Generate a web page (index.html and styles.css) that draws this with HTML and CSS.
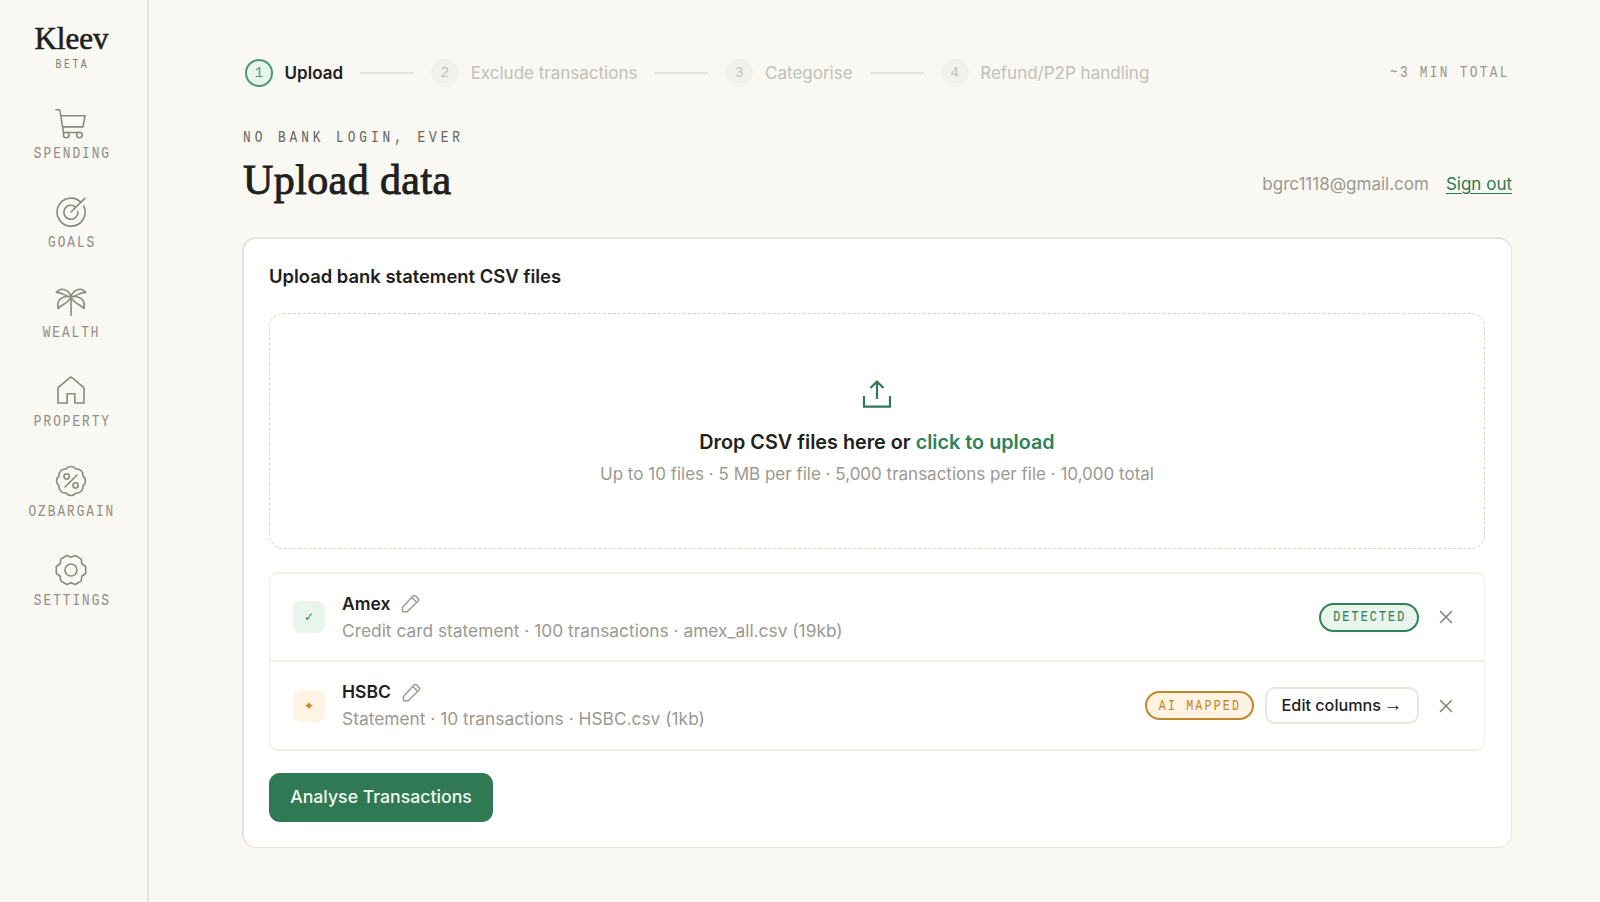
FILE: index.html
```html
<!DOCTYPE html>
<html lang="en">
<head>
  <meta charset="UTF-8" />
  <meta name="viewport" content="width=device-width, initial-scale=1.0"/>
  <title>Kleev - Upload data</title>
  <link rel="stylesheet" href="styles.css">
</head>
<body>
  <aside class="sidebar">
    <div class="logo">Kleev</div>
    <div class="beta mono">BETA</div>

    <nav class="nav">
      <a class="nav-item">
        <svg class="nav-icon" viewBox="0 0 32 32"><path d="M1 2.7h2.6q1.3 0 1.5 1.3L8.6 26.5M6.2 8.8H30l-2 11.1H7.7M12 25.5h12"/><circle cx="11.2" cy="28" r="2.8"/><circle cx="24.4" cy="28" r="2.8"/></svg>
        <span class="mono">SPENDING</span>
      </a>
      <a class="nav-item">
        <svg class="nav-icon" viewBox="0 0 32 32"><path d="M16 16 29.8 2.4M25.5 5.8A14 14 0 1 0 28.8 10.3M20.8 11.2A7 7 0 1 0 22.9 15.5"/></svg>
        <span class="mono">GOALS</span>
      </a>
      <a class="nav-item">
        <svg class="nav-icon" viewBox="0 0 32 32"><path d="M16 11v18.5M16 11C14.5 3.5 5.5 .5 1.3 6.4 7 6.2 10 10 16 11ZM16 11C17.500 3.500 26.500 .5 30.700 6.400 25 6.200 22 10 16 11ZM16 11C9 9 1 13 3 22.500 6 18.500 13 18 16 11ZM16 11C23 9 31 13 29 22.500 26 18.500 19 18 16 11Z"/></svg>
        <span class="mono">WEALTH</span>
      </a>
      <a class="nav-item">
        <svg class="nav-icon" viewBox="0 0 32 32"><path d="M3 28V13.500Q3 12.700 3.600 12.100L15 2.600Q16 1.700 17 2.600L28.400 12.100Q29 12.700 29 13.500V28H19.800V18.800H12.200V28Z"/></svg>
        <span class="mono">PROPERTY</span>
      </a>
      <a class="nav-item">
        <svg class="nav-icon" viewBox="0 0 32 32"><path d="M28 11A6.300 6.300 0 0 1 28 21A6.300 6.300 0 0 1 21 28A6.300 6.300 0 0 1 11 28A6.300 6.300 0 0 1 4 21A6.300 6.300 0 0 1 4 11A6.300 6.300 0 0 1 11 4A6.300 6.300 0 0 1 21 4A6.300 6.300 0 0 1 28 11ZM10 22 22 10"/><circle cx="11.6" cy="11.4" r="2.6"/><circle cx="20.6" cy="20.4" r="2.6"/></svg>
        <span class="mono">OZBARGAIN</span>
      </a>
      <a class="nav-item">
        <svg class="nav-icon" viewBox="0 0 32 32"><path d="M30.7 12.500V19.500L26.800 22.250L26.300 26.900L20.200 30.500L16 28.700L11.800 30.500L5.700 26.900L5.200 22.250L1.300 19.500V12.500L5.200 9.750L5.700 5.100L11.800 1.500L16 3.300L20.200 1.500L26.300 5.100L26.800 9.750Z"/><circle cx="16" cy="16" r="6"/></svg>
        <span class="mono">SETTINGS</span>
      </a>
    </nav>
  </aside>

  <main class="main">
    <div class="steps">
      <div class="step active"><span class="num">1</span>Upload</div>
      <div class="line"></div>
      <div class="step"><span class="num">2</span>Exclude transactions</div>
      <div class="line"></div>
      <div class="step"><span class="num">3</span>Categorise</div>
      <div class="line"></div>
      <div class="step"><span class="num">4</span>Refund/P2P handling</div>
      <div class="total mono">~3 MIN TOTAL</div>
    </div>

    <header class="header">
      <div>
        <div class="eyebrow mono">NO BANK LOGIN, EVER</div>
        <h1>Upload data</h1>
      </div>
      <div class="account">
        <span>bgrc1118@gmail.com</span>
        <a class="sign-out" href="#">Sign out</a>
      </div>
    </header>

    <section class="card">
      <h2>Upload bank statement CSV files</h2>

      <div class="dropzone">
        <svg class="upload-icon" viewBox="0 0 30 30"><path d="M2 17v10.700h26V17M15 20V2.500M8.500 9 15 2.500 21.500 9"/></svg>
        <div class="drop-title">Drop CSV files here or <span>click to upload</span></div>
        <div class="drop-hint">Up to 10 files · 5 MB per file · 5,000 transactions per file · 10,000 total</div>
      </div>

      <div class="files">
        <div class="file">
          <div class="status green">✓</div>
          <div class="info">
            <div class="name">Amex
              <svg class="pencil" viewBox="0 0 20 20"><path d="M1.500 14.200 12.600 2.200Q14 .8 15.500 2.200L18 4.700Q19.200 6 18 7.400L6.500 18.700H2.700Q1.500 18.700 1.500 17.500ZM11.300 3.800 16.300 8.800"/></svg>
            </div>
            <div class="meta">Credit card statement · 100 transactions · amex_all.csv (19kb)</div>
          </div>
          <div class="badge detected green"><span class="mono">DETECTED</span></div>
          <button class="remove"><svg viewBox="0 0 14 14"><path d="M1.500 1.500l11 11M12.500 1.500l-11 11"/></svg></button>
        </div>
        <div class="file">
          <div class="status amber">✦</div>
          <div class="info">
            <div class="name">HSBC
              <svg class="pencil" viewBox="0 0 20 20"><path d="M1.500 14.200 12.600 2.200Q14 .8 15.500 2.200L18 4.700Q19.200 6 18 7.400L6.500 18.700H2.700Q1.500 18.700 1.500 17.500ZM11.300 3.800 16.300 8.800"/></svg>
            </div>
            <div class="meta">Statement · 10 transactions · HSBC.csv (1kb)</div>
          </div>
          <div class="badge mapped amber"><span class="mono">AI MAPPED</span></div>
          <button class="edit">Edit columns <span class="arrow">→</span></button>
          <button class="remove"><svg viewBox="0 0 14 14"><path d="M1.500 1.500l11 11M12.500 1.500l-11 11"/></svg></button>
        </div>
      </div>

      <button class="analyse">Analyse Transactions</button>
    </section>
  </main>
</body>
</html>
```
FILE: styles.css
```css
* {
  box-sizing: border-box;
}

body {
  margin: 0;
  height: 902px;
  display: flex;
  overflow: hidden;
  background: #f9f8f3;
  color: #1e211d;
  font-family: Inter, sans-serif;
  font-size: 17px;
}

svg {
  display: block;
  fill: none;
  stroke: currentColor;
  stroke-width: 1.6;
  stroke-linecap: round;
  stroke-linejoin: round;
}

button {
  font-family: inherit;
  padding: 0;
  cursor: pointer;
}

/* tall, condensed mono labels */
.mono {
  font-family: "Liberation Mono", monospace;
  font-size: 17px;
  line-height: 20px;
  white-space: nowrap;
  transform: scaleX(0.75);
  -webkit-text-stroke: 0.1px;
}

/* sidebar */
.sidebar {
  width: 149px;
  flex-shrink: 0;
  padding: 21px 4px 0 0;
  border-right: 2px solid #e5e4da;
  display: flex;
  flex-direction: column;
  align-items: center;
}

.logo {
  font-family: "Liberation Serif", serif;
  font-size: 31px;
  line-height: 36px;
  -webkit-text-stroke: 0.6px #1e211d;
}

.beta {
  font-size: 13px;
  line-height: 16px;
  letter-spacing: 3.4px;
  margin-right: -2px;
  color: #85837a;
}

.nav {
  display: flex;
  flex-direction: column;
  gap: 32.4px;
  margin-top: 34px;
}

.nav-item {
  height: 57px;
  display: flex;
  flex-direction: column;
  align-items: center;
  color: #8b897f;
}

.nav-icon {
  width: 32px;
  height: 32px;
}

.nav-item .mono {
  margin-top: 5px;
  letter-spacing: 2.65px;
  margin-right: -1px;
  color: #929087;
}

/* main column */
.main {
  flex: 1;
  padding: 58px 88px 0 93px;
}

.steps {
  height: 30px;
  padding: 0 4px 0 3px;
  display: flex;
  align-items: center;
}

.step {
  display: flex;
  align-items: center;
  gap: 11.6px;
  color: #c1c0b9;
  white-space: nowrap;
}

.num {
  width: 28px;
  height: 28px;
  border-radius: 50%;
  display: flex;
  align-items: center;
  justify-content: center;
  background: #f2f1ec;
  font-family: "Liberation Mono", monospace;
  font-size: 14px;
}

.step.active {
  color: #1e211d;
  font-weight: 600;
}

.active .num {
  background: #e8f4ec;
  border: 2px solid #4b9874;
  color: #4b9874;
  font-weight: 400;
}

.line {
  width: 54px;
  height: 2px;
  margin: 0 17px;
  background: #e5e4da;
}

.total {
  margin-left: auto;
  letter-spacing: 3.1px;
  margin-right: -2px;
  transform-origin: right;
  color: #9b9990;
}

.header {
  display: flex;
  justify-content: space-between;
  align-items: flex-end;
  height: 149px;
  padding: 0 0 27px 1px;
}

.eyebrow {
  letter-spacing: 5.3px;
  transform-origin: left;
  color: #66675f;
}

h1 {
  margin: 5px 0 3px;
  font-family: "Liberation Serif", serif;
  font-size: 42px;
  font-weight: 400;
  line-height: 54px;
  letter-spacing: 0.4px;
  -webkit-text-stroke: 0.9px #1e211d;
}

.account {
  display: flex;
  gap: 17px;
  line-height: 24px;
  padding-bottom: 14px;
  color: #9b9990;
}

.sign-out {
  color: #2f7a54;
  text-underline-offset: 3px;
}

.card {
  height: 611px;
  padding: 24px 26px 25px 25px;
  background: #fff;
  border: 2px solid #e5e4da;
  border-right-width: 1px;
  border-bottom-width: 1px;
  border-radius: 14px;
}

h2 {
  margin: 0;
  font-size: 18.4px;
  font-weight: 600;
  line-height: 26px;
}

.dropzone {
  height: 236px;
  margin-top: 24px;
  padding-top: 65px;
  border: 1px dashed #d6d5c9;
  border-radius: 14px;
  display: flex;
  flex-direction: column;
  align-items: center;
}

.upload-icon {
  width: 30px;
  height: 30px;
  color: #2f7a54;
  stroke-width: 2.2;
  stroke-linecap: butt;
  stroke-linejoin: miter;
}

.drop-title {
  margin-top: 20px;
  font-size: 19.8px;
  font-weight: 600;
  line-height: 26px;
}

.drop-title span {
  color: #2f8257;
}

.drop-hint {
  margin-top: 7px;
  line-height: 24px;
  color: #9b9990;
}

/* uploaded files */
.files {
  margin-top: 23px;
  border: 1px solid #efeee8;
  border-width: 2px 1px;
  border-radius: 9px;
}

.file {
  height: 86px;
  padding: 0 21px 0 23px;
  display: flex;
  align-items: center;
}

.file + .file {
  height: 89px;
  border-top: 2px solid #efeee8;
}

.status {
  width: 32px;
  height: 32px;
  margin-right: 17px;
  border-radius: 8px;
  display: flex;
  align-items: center;
  justify-content: center;
  font-family: "DejaVu Sans", sans-serif;
  font-size: 12px;
}

.green {
  background: #e8f4ec;
  color: #2f8257;
}

.amber {
  background: #fff4e2;
  color: #c5872b;
}

.info {
  flex: 1;
}

.name {
  display: flex;
  align-items: center;
  gap: 11px;
  font-size: 17.5px;
  font-weight: 600;
  line-height: 26px;
}

.pencil {
  width: 19px;
  height: 19px;
  color: #9b9990;
  stroke-width: 1.5;
}

.meta {
  font-size: 17.35px;
  line-height: 27px;
  color: #9b9990;
}

.badge {
  height: 29px;
  border: 2px solid;
  border-radius: 15px;
  display: flex;
  align-items: center;
  justify-content: center;
}

.badge .mono {
  font-size: 15.5px;
  letter-spacing: 2.9px;
  margin-right: -1px;
}

.detected {
  width: 100px;
}

.mapped {
  width: 109px;
}

.edit {
  width: 154px;
  height: 37px;
  margin-left: 11px;
  padding-bottom: 2px;
  border: 2px solid #e9e7df;
  border-radius: 10px;
  background: #fff;
  color: #1e211d;
  font-size: 16.2px;
  font-weight: 500;
}

.arrow {
  margin-left: -2px;
  font-family: "Liberation Sans", sans-serif;
  font-size: 19px;
  line-height: 1;
}

.remove {
  width: 34px;
  height: 34px;
  margin-left: 10px;
  border: none;
  background: none;
  color: #85837a;
  display: flex;
  align-items: center;
  justify-content: center;
}

.remove svg {
  width: 14px;
  height: 14px;
}

.analyse {
  width: 224px;
  height: 49px;
  margin-top: 22px;
  padding-bottom: 2px;
  border: none;
  border-radius: 11px;
  background: #2f7a54;
  color: #f4f5ef;
  font-size: 17.7px;
  font-weight: 500;
}
```
